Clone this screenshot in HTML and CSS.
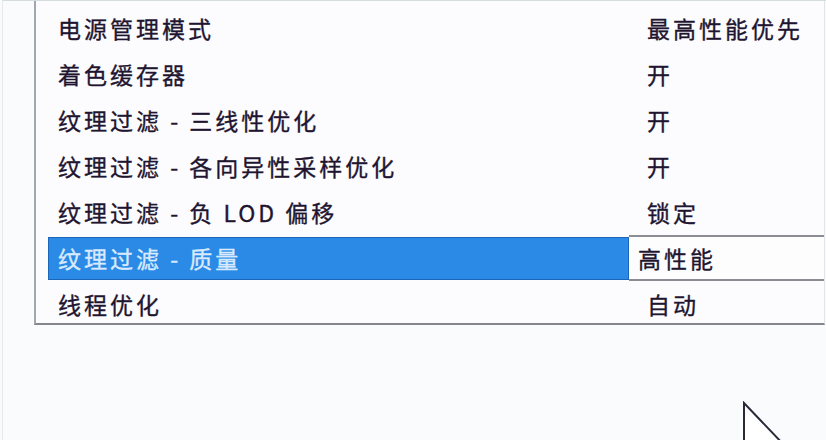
FILE: index.html
```html
<!DOCTYPE html>
<html lang="zh-CN">
<head>
<meta charset="utf-8">
<title>3D 设置</title>
<link rel="stylesheet" href="styles.css">
</head>
<body>
<div class="window">
  <div class="list">
    <div class="row"><div class="name">电源管理模式</div><div class="value">最高性能优先</div></div>
    <div class="row"><div class="name">着色缓存器</div><div class="value">开</div></div>
    <div class="row"><div class="name">纹理过滤 - 三线性优化</div><div class="value">开</div></div>
    <div class="row"><div class="name">纹理过滤 - 各向异性采样优化</div><div class="value">开</div></div>
    <div class="row"><div class="name">纹理过滤 - 负 LOD 偏移</div><div class="value">锁定</div></div>
    <div class="row selected"><div class="name"><span class="hl">纹理过滤 - 质量</span></div><div class="value edit">高性能</div></div>
    <div class="row"><div class="name">线程优化</div><div class="value">自动</div></div>
  </div>
  <svg class="cursor" width="60" height="80" viewBox="0 0 60 80">
    <polygon points="2,2 2,62 16,48 27,72 34,69 23,45 43,45" fill="#ffffff" stroke="#2b2838" stroke-width="2" stroke-linejoin="miter"/>
  </svg>
</div>
</body>
</html>
```

FILE: styles.css
```css
html, body {
  margin: 0;
  padding: 0;
  background: #fafbfd;
}

.window {
  position: relative;
  width: 824px;
  height: 440px;
  margin-left: 2px;
  box-sizing: border-box;
  border-top: 1px solid #d4dcdf;
  border-left: 1px solid #e6e8ec;
  overflow: hidden;
  font-family: "Noto Sans CJK SC", "Noto Sans", sans-serif;
  color: #1f1530;
}

.list {
  margin-left: 31px;
  margin-right: 1px;
  height: 324px;
  box-sizing: border-box;
  padding-top: 4px;
  border-left: 2px solid #a4a6ae;
  border-right: 1px solid #e2e4e8;
  border-bottom: 2px solid #85858e;
  overflow: hidden;
  background: #fcfcfe;
}

.row {
  display: flex;
  height: 46px;
  align-items: stretch;
  font-size: 23px;
  letter-spacing: 3px;
  line-height: 46px;
  -webkit-text-stroke: 0.35px currentColor;
}

.name {
  width: 593px;
  box-sizing: border-box;
  flex: none;
  padding-left: 22px;
  white-space: nowrap;
}

.value {
  flex: 1;
  padding-left: 18px;
  white-space: nowrap;
}

.selected .name {
  padding: 2px 0 1px 12px;
  display: flex;
}

.hl {
  flex: 1;
  background: #2a8ae6;
  border: 1px solid #1b66b8;
  color: #d9eaff;
  padding-left: 9px;
  line-height: 41px;
}

.value.edit {
  background: #fdfdfe;
  border-top: 2px solid #8c8c95;
  border-bottom: 2px solid #8c8c95;
  padding-left: 9px;
  line-height: 42px;
}

.cursor {
  position: absolute;
  left: 739px;
  top: 400px;
}
```
